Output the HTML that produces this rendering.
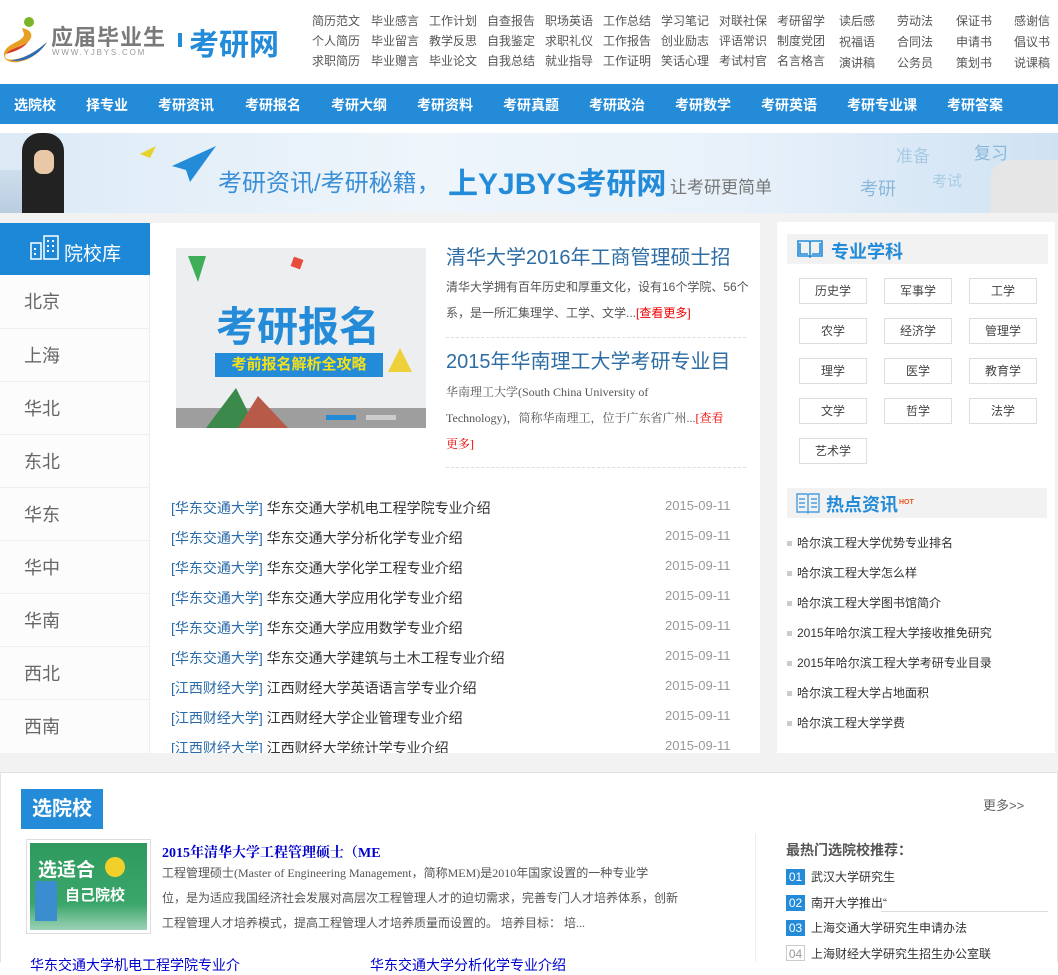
<!DOCTYPE html>
<html><head><meta charset="utf-8"><style>
*{margin:0;padding:0;box-sizing:border-box}
body{width:1058px;height:962px;overflow:hidden;background:#fff;font-family:"Liberation Sans","Noto Sans CJK SC",sans-serif;position:relative;color:#333}
.a{position:absolute;white-space:nowrap}
.tl{font-size:12px;color:#555}
.nav{left:0;top:84px;width:1058px;height:40px;background:#238bd8}
.nav span{position:absolute;top:11px;font-size:14px;font-weight:bold;color:#fff}
.gray{left:0;top:213px;width:1058px;height:559px;background:#f2f2f2}
.side{left:0;top:223px;width:150px;height:530px;background:#fcfcfc;border-right:1px solid #eee}
.side .it{position:absolute;left:0;width:149px;height:53px;border-top:1px solid #eee;font-size:18px;color:#666;padding:13px 0 0 24px}
.main{left:150px;top:223px;width:610px;height:530px;background:#fff}
.right{left:777px;top:222px;width:278px;height:531px;background:#fff}
.btn{position:absolute;width:68px;height:26px;border:1px solid #ddd;font-size:12px;color:#444;text-align:center;line-height:24px;background:#fff}
.li{font-size:14px;color:#333}
.li b{font-weight:normal;color:#2a6aa8}
.dt{font-size:13px;color:#999;left:665px}
.hl{font-size:12px;color:#333}
.hl i{display:inline-block;width:5px;height:5px;background:#ccc;margin-right:5px;vertical-align:middle}
.num{display:inline-block;width:19px;height:16px;background:#238bd8;color:#fff;font-size:12px;text-align:center;line-height:16px;margin-right:6px}
</style></head><body>
<!-- logo -->
<svg class="a" style="left:2px;top:14px" width="46" height="50" viewBox="0 0 46 50">
<circle cx="27" cy="8" r="5" fill="#7cb428"/>
<path d="M20 14 C30 16 32 22 26 28 C18 34 8 34 4 40 C0 46 10 48 24 42 C34 38 42 30 45 28 C40 36 30 46 16 48 C2 50 -2 40 6 33 C12 28 22 26 22 20Z" fill="#e8a024"/>
<path d="M4 40 C8 34 18 34 26 28 C20 36 10 38 4 40Z" fill="#d63a2a"/>
<path d="M8 46 C20 46 34 38 45 28 C38 40 22 50 8 46Z" fill="#2a6bb8"/>
</svg>
<div class="a" style="left:51px;top:20px;font-size:22px;font-weight:bold;color:#7a7a7a;letter-spacing:1px">应届毕业生</div>
<div class="a" style="left:52px;top:48px;font-size:8px;color:#999;letter-spacing:1.8px">WWW.YJBYS.COM</div>
<div class="a" style="left:178px;top:33px;width:4px;height:14px;background:#238bd8"></div>
<div class="a" style="left:189px;top:20px;font-size:30px;font-weight:bold;color:#238bd8">考研网</div>
<!-- top links -->
<div class="a tl" style="left:312px;top:11px;line-height:20px">简历范文<br>个人简历<br>求职简历</div>
<div class="a tl" style="left:371px;top:11px;line-height:20px">毕业感言<br>毕业留言<br>毕业赠言</div>
<div class="a tl" style="left:429px;top:11px;line-height:20px">工作计划<br>教学反思<br>毕业论文</div>
<div class="a tl" style="left:487px;top:11px;line-height:20px">自查报告<br>自我鉴定<br>自我总结</div>
<div class="a tl" style="left:545px;top:11px;line-height:20px">职场英语<br>求职礼仪<br>就业指导</div>
<div class="a tl" style="left:603px;top:11px;line-height:20px">工作总结<br>工作报告<br>工作证明</div>
<div class="a tl" style="left:661px;top:11px;line-height:20px">学习笔记<br>创业励志<br>笑话心理</div>
<div class="a tl" style="left:719px;top:11px;line-height:20px">对联社保<br>评语常识<br>考试村官</div>
<div class="a tl" style="left:777px;top:11px;line-height:20px">考研留学<br>制度党团<br>名言格言</div>
<div class="a tl" style="left:839px;top:11px;line-height:21px">读后感<br>祝福语<br>演讲稿</div>
<div class="a tl" style="left:897px;top:11px;line-height:21px">劳动法<br>合同法<br>公务员</div>
<div class="a tl" style="left:956px;top:11px;line-height:21px">保证书<br>申请书<br>策划书</div>
<div class="a tl" style="left:1014px;top:11px;line-height:21px">感谢信<br>倡议书<br>说课稿</div>
<!-- nav -->
<div class="a nav">
<span style="left:14px">选院校</span><span style="left:86px">择专业</span><span style="left:158px">考研资讯</span><span style="left:245px">考研报名</span><span style="left:331px">考研大纲</span><span style="left:417px">考研资料</span><span style="left:503px">考研真题</span><span style="left:589px">考研政治</span><span style="left:675px">考研数学</span><span style="left:761px">考研英语</span><span style="left:847px">考研专业课</span><span style="left:947px">考研答案</span>
</div>
<!-- banner -->
<div class="a" style="left:0;top:133px;width:1058px;height:80px;background:linear-gradient(90deg,#dceaf6,#eef5fb 40%,#e8f1fa 70%,#cfe2f3)"></div>
<div class="a" style="left:0;top:170px;width:60px;height:43px;background:linear-gradient(#c9d9e8,#a9c0d6);opacity:.7"></div>
<div class="a" style="left:22px;top:133px;width:42px;height:80px;background:#222;border-radius:18px 18px 0 0"></div>
<div class="a" style="left:34px;top:150px;width:20px;height:24px;background:#e9c8a8;border-radius:8px"></div>
<svg class="a" style="left:138px;top:142px" width="80" height="40"><path d="M2 12 L18 4 L12 16Z" fill="#e6d22a"/><path d="M34 24 L78 4 L52 40 L48 28Z" fill="#238bd8"/></svg>
<div class="a" style="left:218px;top:163px;font-size:24px;color:#3a8fd6">考研资讯/考研秘籍，</div>
<div class="a" style="left:448px;top:159px;font-size:30px;font-weight:bold;color:#238bd8">上YJBYS考研网</div>
<div class="a" style="left:670px;top:173px;font-size:17px;color:#777">让考研更简单</div>
<div class="a" style="left:860px;top:175px;font-size:18px;color:#8ab8dc">考研</div>
<div class="a" style="left:896px;top:142px;font-size:17px;color:#a8cbe6">准备</div>
<div class="a" style="left:974px;top:139px;font-size:17px;color:#8ab8dc">复习</div>
<div class="a" style="left:932px;top:170px;font-size:15px;color:#a8cbe6">考试</div>
<div class="a" style="left:990px;top:160px;width:68px;height:53px;background:#e6e6e6;border-radius:20px 0 0 0"></div>
<!-- gray -->
<div class="a gray"></div>
<!-- sidebar -->
<div class="a side">
<div style="position:absolute;left:0;top:0;width:150px;height:52px;background:#1e88d8"></div>
<svg style="position:absolute;left:30px;top:12px" width="30" height="26"><g fill="none" stroke="#fff" stroke-width="1.5"><rect x="1" y="8" width="10" height="16"/><rect x="14" y="1" width="14" height="23"/></g><g fill="#fff"><rect x="17" y="5" width="2" height="2"/><rect x="22" y="5" width="2" height="2"/><rect x="17" y="10" width="2" height="2"/><rect x="22" y="10" width="2" height="2"/><rect x="17" y="15" width="2" height="2"/><rect x="22" y="15" width="2" height="2"/><rect x="4" y="13" width="2" height="2"/><rect x="4" y="18" width="2" height="2"/></g></svg>
<div style="position:absolute;left:64px;top:16px;font-size:19px;color:#fff">院校库</div>
<div class="it" style="top:52px;border-top:none">北京</div>
<div class="it" style="top:105px">上海</div>
<div class="it" style="top:158px">华北</div>
<div class="it" style="top:211px">东北</div>
<div class="it" style="top:264px">华东</div>
<div class="it" style="top:317px">华中</div>
<div class="it" style="top:370px">华南</div>
<div class="it" style="top:423px">西北</div>
<div class="it" style="top:476px">西南</div>
</div>
<!-- main -->
<div class="a main"></div>
<div class="a" style="left:176px;top:248px;width:250px;height:180px;background:#eceef0;overflow:hidden">
<div style="position:absolute;left:12px;top:8px;width:0;height:0;border-left:10px solid transparent;border-right:8px solid transparent;border-top:26px solid #3fae58"></div>
<div style="position:absolute;left:116px;top:10px;width:10px;height:10px;background:#e74c3c;transform:rotate(20deg)"></div>
<div style="position:absolute;left:40px;top:45px;font-size:41px;font-weight:bold;color:#238bd8">考研报名</div>
<div style="position:absolute;left:39px;top:105px;width:168px;height:24px;background:#238bd8;color:#f3e01b;font-size:15px;font-weight:bold;text-align:center;line-height:24px">考前报名解析全攻略</div>
<div style="position:absolute;left:212px;top:100px;width:0;height:0;border-left:12px solid transparent;border-right:12px solid transparent;border-bottom:24px solid #eed03a"></div>
<div style="position:absolute;left:0;top:160px;width:250px;height:20px;background:#9e9e9e"></div>
<div style="position:absolute;left:30px;top:140px;width:0;height:0;border-left:30px solid transparent;border-right:20px solid transparent;border-bottom:40px solid #3b8a4c"></div>
<div style="position:absolute;left:62px;top:148px;width:0;height:0;border-left:20px solid transparent;border-right:30px solid transparent;border-bottom:32px solid #b85a48"></div>
<div style="position:absolute;left:150px;top:167px;width:30px;height:5px;background:#238bd8"></div>
<div style="position:absolute;left:190px;top:167px;width:30px;height:5px;background:#ccc"></div>
</div>
<div class="a" style="left:446px;top:241px;font-size:20px;color:#2e6da4">清华大学2016年工商管理硕士招</div>
<div class="a" style="left:446px;top:274px;font-size:12px;color:#555;line-height:26px">清华大学拥有百年历史和厚重文化，设有16个学院、56个<br>系，是一所汇集理学、工学、文学...<span style="color:#e00">[查看更多]</span></div>
<div class="a" style="left:446px;top:337px;width:300px;border-top:1px dashed #ddd"></div>
<div class="a" style="left:446px;top:345px;font-size:20px;color:#2e6da4">2015年华南理工大学考研专业目</div>
<div class="a" style="left:446px;top:379px;font-size:12px;color:#555;line-height:26px;font-family:'Liberation Serif','Noto Serif CJK SC',serif">华南理工大学(South China University of<br>Technology)，简称华南理工，位于广东省广州...<span style="color:#e00">[查看</span><br><span style="color:#e00">更多]</span></div>
<div class="a" style="left:446px;top:467px;width:300px;border-top:1px dashed #ddd"></div>
<div class="a li" style="left:171px;top:498px"><b>[华东交通大学]</b> 华东交通大学机电工程学院专业介绍</div><div class="a dt" style="top:498px">2015-09-11</div>
<div class="a li" style="left:171px;top:528px"><b>[华东交通大学]</b> 华东交通大学分析化学专业介绍</div><div class="a dt" style="top:528px">2015-09-11</div>
<div class="a li" style="left:171px;top:558px"><b>[华东交通大学]</b> 华东交通大学化学工程专业介绍</div><div class="a dt" style="top:558px">2015-09-11</div>
<div class="a li" style="left:171px;top:588px"><b>[华东交通大学]</b> 华东交通大学应用化学专业介绍</div><div class="a dt" style="top:588px">2015-09-11</div>
<div class="a li" style="left:171px;top:618px"><b>[华东交通大学]</b> 华东交通大学应用数学专业介绍</div><div class="a dt" style="top:618px">2015-09-11</div>
<div class="a li" style="left:171px;top:648px"><b>[华东交通大学]</b> 华东交通大学建筑与土木工程专业介绍</div><div class="a dt" style="top:648px">2015-09-11</div>
<div class="a li" style="left:171px;top:678px"><b>[江西财经大学]</b> 江西财经大学英语语言学专业介绍</div><div class="a dt" style="top:678px">2015-09-11</div>
<div class="a li" style="left:171px;top:708px"><b>[江西财经大学]</b> 江西财经大学企业管理专业介绍</div><div class="a dt" style="top:708px">2015-09-11</div>
<div class="a" style="left:150px;top:736px;width:610px;height:17px;overflow:hidden"><div class="li" style="position:absolute;left:21px;top:2px;white-space:nowrap"><b>[江西财经大学]</b> 江西财经大学统计学专业介绍</div><div style="position:absolute;left:515px;top:2px;font-size:13px;color:#999">2015-09-11</div></div>
<!-- right -->
<div class="a right"></div>
<div class="a" style="left:787px;top:234px;width:261px;height:30px;background:#f2f2f2"></div>
<svg class="a" style="left:797px;top:239px" width="26" height="19"><g fill="none" stroke="#238bd8" stroke-width="1.6"><path d="M1 2 L1 17 L12 17 L13 18 L14 17 L25 17 L25 2 L14 2 L13 3 L12 2Z"/><path d="M13 3 L13 17"/><path d="M3 4 L3 15 L11 15 M23 4 L23 15 L15 15"/></g></svg>
<div class="a" style="left:831px;top:238px;font-size:18px;font-weight:bold;color:#238bd8">专业学科</div>
<div class="btn a" style="left:799px;top:278px">历史学</div><div class="btn a" style="left:884px;top:278px">军事学</div><div class="btn a" style="left:969px;top:278px">工学</div>
<div class="btn a" style="left:799px;top:318px">农学</div><div class="btn a" style="left:884px;top:318px">经济学</div><div class="btn a" style="left:969px;top:318px">管理学</div>
<div class="btn a" style="left:799px;top:358px">理学</div><div class="btn a" style="left:884px;top:358px">医学</div><div class="btn a" style="left:969px;top:358px">教育学</div>
<div class="btn a" style="left:799px;top:398px">文学</div><div class="btn a" style="left:884px;top:398px">哲学</div><div class="btn a" style="left:969px;top:398px">法学</div>
<div class="btn a" style="left:799px;top:438px">艺术学</div>
<div class="a" style="left:787px;top:488px;width:260px;height:30px;background:#f2f2f2"></div>
<svg class="a" style="left:796px;top:492px" width="24" height="22"><g fill="none" stroke="#4a9ee0" stroke-width="1.4"><path d="M1 2 L11 2 L12 3 L13 2 L23 2 L23 20 L13 20 L12 21 L11 20 L1 20Z"/><path d="M12 3 L12 20 M3 7 H9 M3 11 H9 M3 15 H9 M15 7 H21 M15 11 H21 M15 15 H21"/></g></svg>
<div class="a" style="left:826px;top:491px;font-size:18px;font-weight:bold;color:#238bd8">热点资讯</div>
<div class="a" style="left:899px;top:499px;font-size:7px;color:#e52;font-weight:bold">HOT</div>
<div class="a hl" style="left:787px;top:534px"><i></i>哈尔滨工程大学优势专业排名</div>
<div class="a hl" style="left:787px;top:564px"><i></i>哈尔滨工程大学怎么样</div>
<div class="a hl" style="left:787px;top:594px"><i></i>哈尔滨工程大学图书馆简介</div>
<div class="a hl" style="left:787px;top:624px"><i></i>2015年哈尔滨工程大学接收推免研究</div>
<div class="a hl" style="left:787px;top:654px"><i></i>2015年哈尔滨工程大学考研专业目录</div>
<div class="a hl" style="left:787px;top:684px"><i></i>哈尔滨工程大学占地面积</div>
<div class="a hl" style="left:787px;top:714px"><i></i>哈尔滨工程大学学费</div>
<!-- lower -->
<div class="a" style="left:0;top:772px;width:1058px;height:190px;background:#fff;border:1px solid #e2e2e2;border-bottom:none"></div>
<div class="a" style="left:21px;top:789px;width:82px;height:40px;background:#238bd8;color:#fff;font-size:20px;font-weight:bold;text-align:center;line-height:40px">选院校</div>
<div class="a" style="left:983px;top:795px;font-size:13px;color:#666">更多&gt;&gt;</div>
<div class="a" style="left:26px;top:839px;width:125px;height:95px;border:1px solid #ddd;padding:3px;background:#fff"><div style="width:100%;height:100%;background:linear-gradient(#2f9a5e,#3aa66a 70%,#9cd2b6);position:relative"><div style="position:absolute;left:8px;top:12px;font-size:19px;font-weight:bold;color:#fff">选适合</div><div style="position:absolute;left:75px;top:14px;width:20px;height:20px;border-radius:10px;background:#f2d02a"></div><div style="position:absolute;left:35px;top:41px;font-size:15px;font-weight:bold;color:#fff">自己院校</div><div style="position:absolute;left:5px;top:38px;width:22px;height:40px;background:#3a8ed0"></div></div></div>
<div class="a" style="left:162px;top:842px;font-size:14px;font-weight:bold;color:#0000cc;font-family:'Liberation Serif','Noto Serif CJK SC',serif">2015年清华大学工程管理硕士（ME</div>
<div class="a" style="left:162px;top:861px;font-size:12px;color:#555;line-height:25px;font-family:'Liberation Serif','Noto Sans CJK SC',serif">工程管理硕士(Master of Engineering Management，简称MEM)是2010年国家设置的一种专业学<br>位，是为适应我国经济社会发展对高层次工程管理人才的迫切需求，完善专门人才培养体系，创新<br>工程管理人才培养模式，提高工程管理人才培养质量而设置的。 培养目标： 培...</div>
<div class="a" style="left:755px;top:834px;width:1px;height:128px;background:#eee"></div>
<div class="a" style="left:786px;top:840px;font-size:14px;font-weight:bold;color:#555">最热门选院校推荐：</div>
<div class="a" style="left:786px;top:868px;font-size:12px;color:#333"><span class="num">01</span>武汉大学研究生</div>
<div class="a" style="left:786px;top:894px;font-size:12px;color:#333"><span class="num">02</span>南开大学推出“</div>
<div class="a" style="left:881px;top:911px;width:167px;height:1px;background:#ddd"></div>
<div class="a" style="left:786px;top:919px;font-size:12px;color:#333"><span class="num">03</span>上海交通大学研究生申请办法</div>
<div class="a" style="left:786px;top:945px;font-size:12px;color:#333"><span class="num" style="background:#fff;color:#999;border:1px solid #ccc">04</span>上海财经大学研究生招生办公室联</div>
<div class="a" style="left:30px;top:955px;font-size:14px;color:#0000cc">华东交通大学机电工程学院专业介</div>
<div class="a" style="left:370px;top:955px;font-size:14px;color:#0000cc">华东交通大学分析化学专业介绍</div>
</body></html>
